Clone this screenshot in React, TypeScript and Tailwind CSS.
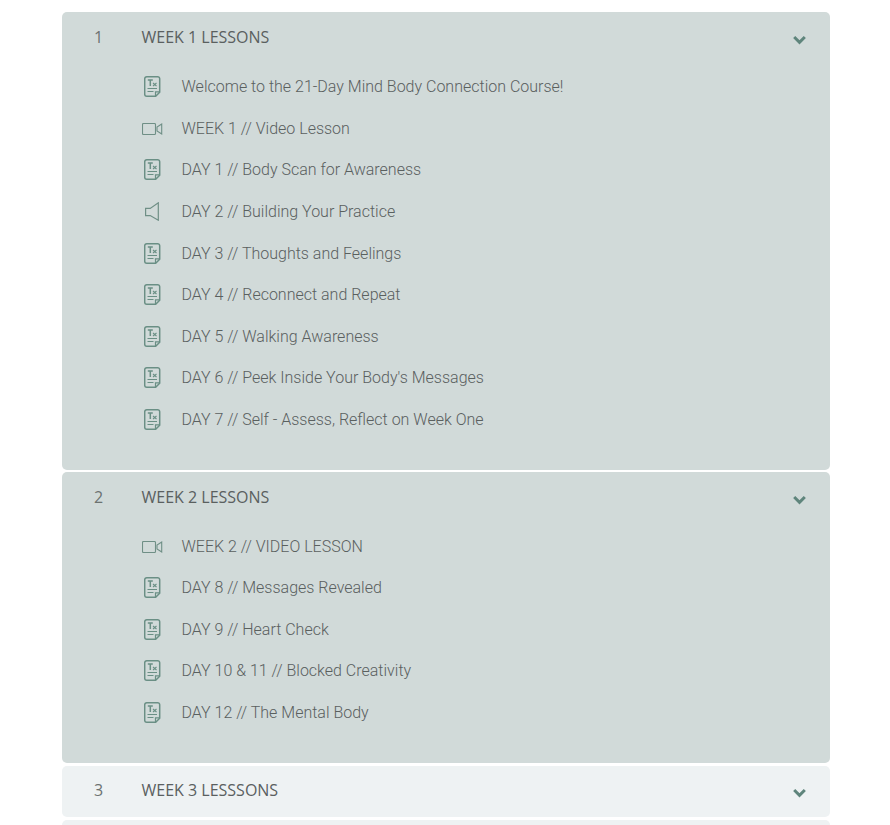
type LessonType = "text" | "video" | "audio";

interface Lesson {
  type: LessonType;
  title: string;
}

interface Section {
  num: number;
  title: string;
  listPad: string;
  lessons: Lesson[];
}

const sections: Section[] = [
  {
    num: 1,
    title: "WEEK 1 LESSONS",
    listPad: "pt-[3.4px]",
    lessons: [
      { type: "text", title: "Welcome to the 21-Day Mind Body Connection Course!" },
      { type: "video", title: "WEEK 1 // Video Lesson" },
      { type: "text", title: "DAY 1 // Body Scan for Awareness" },
      { type: "audio", title: "DAY 2 // Building Your Practice" },
      { type: "text", title: "DAY 3 // Thoughts and Feelings" },
      { type: "text", title: "DAY 4 // Reconnect and Repeat" },
      { type: "text", title: "DAY 5 // Walking Awareness" },
      { type: "text", title: "DAY 6 // Peek Inside Your Body's Messages" },
      { type: "text", title: "DAY 7 // Self - Assess, Reflect on Week One" },
    ],
  },
  {
    num: 2,
    title: "WEEK 2 LESSONS",
    listPad: "pt-[3px]",
    lessons: [
      { type: "video", title: "WEEK 2 // VIDEO LESSON" },
      { type: "text", title: "DAY 8 // Messages Revealed" },
      { type: "text", title: "DAY 9 // Heart Check" },
      { type: "text", title: "DAY 10 & 11 // Blocked Creativity" },
      { type: "text", title: "DAY 12 // The Mental Body" },
    ],
  },
];

function LessonIcon({ type }: { type: LessonType }) {
  if (type === "video") {
    return (
      <svg width="21" height="12" viewBox="0 0 21 12" fill="none" stroke="#6f8f86" strokeWidth="1.1">
        <rect x="0.5" y="0.5" width="13" height="11" rx="1" />
        <path d="M19.7 1v10l-4.7-3V4z" />
      </svg>
    );
  }
  if (type === "audio") {
    return (
      <svg width="14" height="19" viewBox="0 0 14 19" fill="none" stroke="#6f8f86" strokeWidth="1.2" className="ml-[3px]">
        <path d="M13.3.8v17.4L5.2 13.6H.6V6.4h4.6z" />
      </svg>
    );
  }
  return (
    <svg width="17" height="21" viewBox="0 0 17 21" fill="none" stroke="#6a8f85" className="ml-[2px] -mt-[1px]">
      <path d="M2.7.8h11a2 2 0 0 1 2 2v13.4l-4 4h-9a2 2 0 0 1-2-2V2.800a2 2 0 0 1 2-2z" strokeWidth="1.5" />
      <path d="M15.700 15.800h-4.200v4.200" strokeWidth="1.2" />
      <path d="M3.500 12.500h9.500M3.500 15.500h6" strokeWidth="1.100" />
      <path d="M3.800 4h5M6.300 4v6" strokeWidth="1.500" />
      <path d="M9 7l3.500 3M12.500 7L9 10" strokeWidth="1.100" />
    </svg>
  );
}

function SectionHeader({ num, title, pad = "pb-[1px]" }: { num: number; title: string; pad?: string }) {
  return (
    <div className={`flex h-[51px] items-center pl-[32px] pr-[24px] ${pad} font-['Open_Sans',sans-serif] text-[#5a605f]`}>
      <span className="w-[47.5px] text-[16px] text-[#6c7271]">{num}</span>
      <span className="flex-1 text-[16px]">{title}</span>
      <svg width="13" height="10" viewBox="0 0 13 10" fill="none" stroke="#5f857c" strokeWidth="3" className="mt-[6px]">
        <path d="M1.2 2l5.3 5.3L11.8 2" />
      </svg>
    </div>
  );
}

export default function App() {
  return (
    <div className="h-[825px] overflow-hidden bg-white pl-[62px] pr-[60px] pt-[12px]">
      <div className="flex flex-col gap-[2px]">
        {sections.map((section) => (
          <div key={section.num} className="rounded-[5px] bg-[#d1dad9] pb-[29px]">
            <SectionHeader num={section.num} title={section.title} />
            <ul className={`pl-[80px] ${section.listPad}`}>
              {section.lessons.map((lesson) => (
                <li key={lesson.title} className="flex h-[41.6px] items-center">
                  <span className="flex w-[39.5px] items-center">
                    <LessonIcon type={lesson.type} />
                  </span>
                  <span className="font-['Roboto',sans-serif] text-[16px] font-light text-[#5a605f]">
                    {lesson.title}
                  </span>
                </li>
              ))}
            </ul>
          </div>
        ))}
        <div className="mt-[1px] rounded-[5px] bg-[#eef2f3]">
          <SectionHeader num={3} title="WEEK 3 LESSSONS" pad="pb-[3px]" />
        </div>
        <div className="mt-[1px] h-[40px] rounded-[5px] bg-[#eef2f3]" />
      </div>
    </div>
  );
}
